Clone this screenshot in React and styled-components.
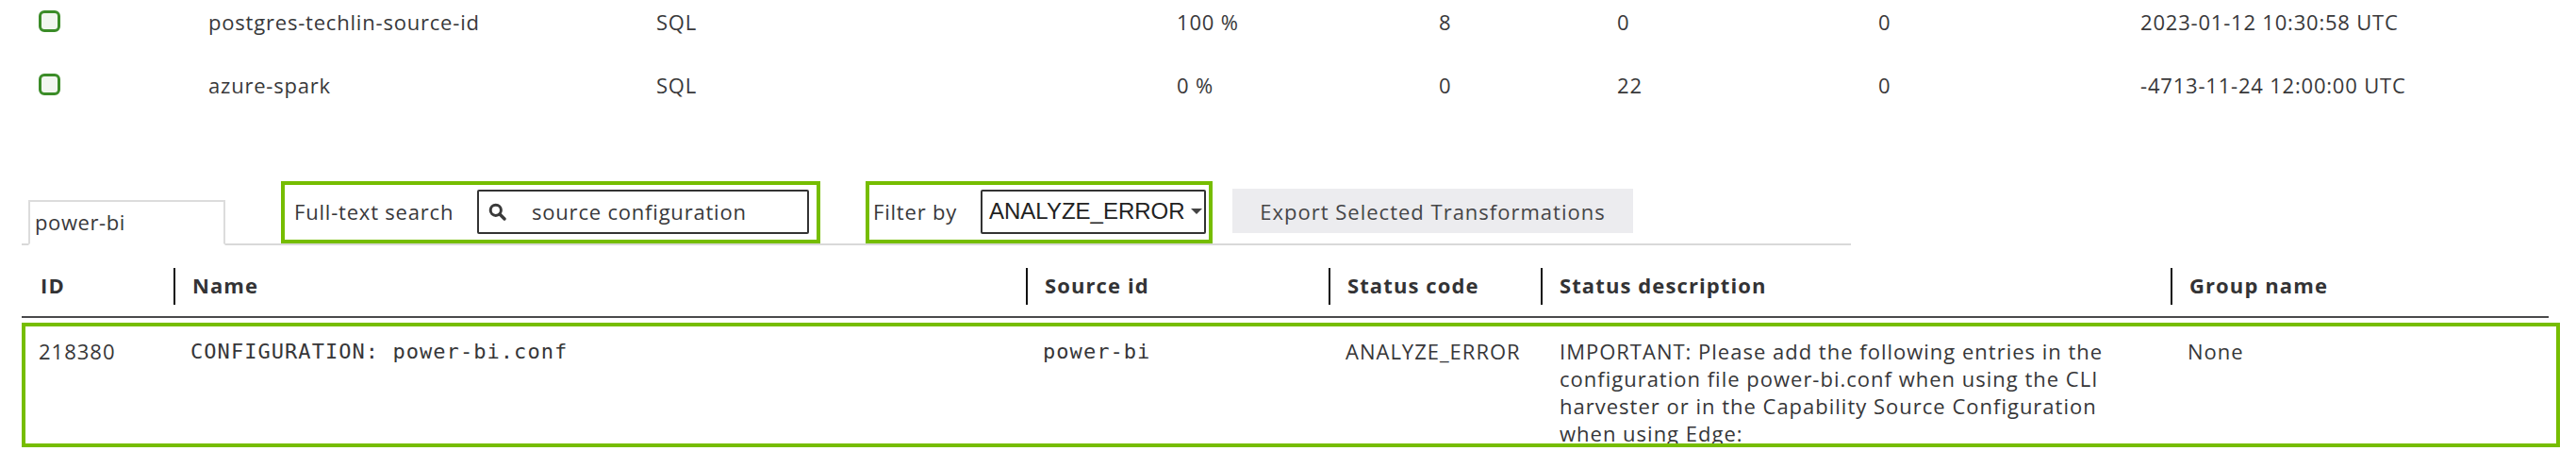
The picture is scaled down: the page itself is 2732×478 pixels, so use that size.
import styled, { createGlobalStyle } from "styled-components";

const GREEN = "#76bd00";

const sources = [
  {
    id: "postgres-techlin-source-id",
    type: "SQL",
    progress: "100 %",
    passed: "8",
    failed: "0",
    skipped: "0",
    lastRun: "2023-01-12 10:30:58 UTC",
  },
  {
    id: "azure-spark",
    type: "SQL",
    progress: "0 %",
    passed: "0",
    failed: "22",
    skipped: "0",
    lastRun: "-4713-11-24 12:00:00 UTC",
  },
];

const columns = [
  "ID",
  "Name",
  "Source id",
  "Status code",
  "Status description",
  "Group name",
];

const transformation = {
  id: "218380",
  name: "CONFIGURATION: power-bi.conf",
  sourceId: "power-bi",
  status: "ANALYZE_ERROR",
  description:
    "IMPORTANT: Please add the following entries in the configuration file power-bi.conf when using the CLI harvester or in the Capability Source Configuration when using Edge:",
  group: "None",
};

const App = () => {
  return (
    <>
      <GlobalStyle />
      <Page>
        <SourceList>
          {sources.map((s) => (
            <SourceRow key={s.id}>
              <Checkbox />
              <span>{s.id}</span>
              <span>{s.type}</span>
              <span>{s.progress}</span>
              <span>{s.passed}</span>
              <span>{s.failed}</span>
              <span>{s.skipped}</span>
              <span>{s.lastRun}</span>
            </SourceRow>
          ))}
        </SourceList>

        <TabBar>
          <Tab>power-bi</Tab>
          <Group $width={572} $ml={59} $pl={10} $pr={8}>
            <span>Full-text search</span>
            <SearchBox>
              <svg width="19" height="19" viewBox="0 0 19 19">
                <circle
                  cx="7.8"
                  cy="7.8"
                  r="5.6"
                  fill="none"
                  stroke="#3a3a3a"
                  strokeWidth="3"
                />
                <path
                  d="M12 12 L17 17"
                  stroke="#3a3a3a"
                  strokeWidth="3.4"
                  strokeLinecap="round"
                />
              </svg>
              <SearchText>source configuration</SearchText>
            </SearchBox>
          </Group>
          <Group $width={368} $ml={48} $pl={4} $pr={3}>
            <span>Filter by</span>
            <Select>
              <span>ANALYZE_ERROR</span>
              <Caret />
            </Select>
          </Group>
          <ExportButton>Export Selected Transformations</ExportButton>
        </TabBar>

        <Table>
          <HeaderRow>
            {columns.map((c, i) => (
              <HeaderCell key={c} $first={i === 0}>
                {c}
              </HeaderCell>
            ))}
          </HeaderRow>
          <BodyRow>
            <Cell>{transformation.id}</Cell>
            <Cell $mono>{transformation.name}</Cell>
            <Cell $mono>{transformation.sourceId}</Cell>
            <Cell>{transformation.status}</Cell>
            <Cell $wrap>{transformation.description}</Cell>
            <Cell>{transformation.group}</Cell>
            <Highlight />
          </BodyRow>
        </Table>
      </Page>
    </>
  );
};

const GlobalStyle = createGlobalStyle`
  html, body {
    margin: 0;
    background: #fff;
  }
  body {
    font-family: "Open Sans", "Noto Sans", sans-serif;
    font-size: 22px;
    color: #38383a;
    overflow: hidden;
  }
`;

const Page = styled.div`
  width: 2732px;
  height: 478px;
  overflow: hidden;
`;

const SourceList = styled.div`
  margin-top: -11px;
`;

const SourceRow = styled.div`
  display: grid;
  grid-template-columns: 180px 475px 552px 278px 189px 277px 278px 1fr;
  align-items: center;
  height: 67px;
  padding-left: 41px;
  letter-spacing: 0.8px;
  white-space: nowrap;
`;

const Checkbox = styled.span`
  display: block;
  width: 23px;
  height: 23px;
  box-sizing: border-box;
  border: 3px solid #3b8c28;
  border-radius: 6px;
  background: #f1f6ef;
`;

const TabBar = styled.div`
  display: flex;
  align-items: flex-end;
  width: 1940px;
  margin: 69px 0 0 23px;
  border-bottom: 2px solid #d9d9d9;
  white-space: nowrap;
`;

const Tab = styled.div`
  box-sizing: border-box;
  width: 209px;
  height: 48px;
  margin: 0 0 -2px 7px;
  padding: 6px 0 0 5px;
  border: 2px solid #dcdcdc;
  border-bottom-color: #fff;
  background: #fff;
  letter-spacing: 0.6px;
`;

const Group = styled.div`
  box-sizing: border-box;
  display: flex;
  align-items: center;
  justify-content: space-between;
  width: ${(p) => p.$width}px;
  height: 66px;
  margin-left: ${(p) => p.$ml}px;
  padding: 0 ${(p) => p.$pr}px 2px ${(p) => p.$pl}px;
  border: 4px solid ${GREEN};
  letter-spacing: 0.8px;
`;

const SearchBox = styled.div`
  box-sizing: border-box;
  display: flex;
  align-items: center;
  width: 352px;
  height: 47px;
  padding-left: 10px;
  border: 2px solid #333;
  border-radius: 2px;
`;

const SearchText = styled.span`
  margin-left: 27px;
`;

const Select = styled.div`
  box-sizing: border-box;
  display: flex;
  align-items: center;
  justify-content: space-between;
  width: 239px;
  height: 47px;
  padding: 0 2px 0 7px;
  border: 2px solid #333;
  border-radius: 2px;
  font-family: "Liberation Sans", Arial, sans-serif;
  font-size: 24px;
  letter-spacing: 0;
  color: #222;
`;

const Caret = styled.span`
  width: 0;
  height: 0;
  border-left: 6px solid transparent;
  border-right: 6px solid transparent;
  border-top: 6px solid #444;
`;

const ExportButton = styled.button`
  width: 425px;
  height: 47px;
  margin: 0 0 11px 21px;
  border: none;
  background: #ececef;
  font-family: "Open Sans", "Noto Sans", sans-serif;
  font-size: 22px;
  letter-spacing: 1px;
  color: #454547;
`;

const Table = styled.div`
  width: 2680px;
  margin-left: 23px;
`;

const grid = `
  display: grid;
  grid-template-columns: 161px 904px 321px 225px 668px 401px;
`;

const HeaderRow = styled.div`
  ${grid}
  padding: 24px 0 12px;
  border-bottom: 2px solid #4a4a4c;
`;

const HeaderCell = styled.div`
  display: flex;
  align-items: center;
  box-sizing: border-box;
  height: 39px;
  padding: 0 0 4px ${(p) => (p.$first ? 20 : 18)}px;
  border-left: ${(p) => (p.$first ? "none" : "2px solid #111")};
  font-weight: 700;
  letter-spacing: 1.1px;
  color: #333335;
`;

const BodyRow = styled.div`
  ${grid}
  position: relative;
  padding-top: 21px;
  line-height: 29px;
`;

const Cell = styled.div`
  padding: 0 ${(p) => (p.$wrap ? 50 : 10)}px 0 ${(p) => (p.$wrap ? 20 : 18)}px;
  font-family: ${(p) =>
    p.$mono ? '"DejaVu Sans Mono", monospace' : '"Open Sans", sans-serif'};
  letter-spacing: ${(p) => (p.$mono ? 1.05 : 1)}px;
  white-space: ${(p) => (p.$wrap ? "normal" : "nowrap")};
  color: #363638;
`;

const Highlight = styled.div`
  position: absolute;
  left: 0;
  top: 5px;
  width: 2692px;
  height: 132px;
  box-sizing: border-box;
  border: 4px solid ${GREEN};
  pointer-events: none;
`;

export default App;
